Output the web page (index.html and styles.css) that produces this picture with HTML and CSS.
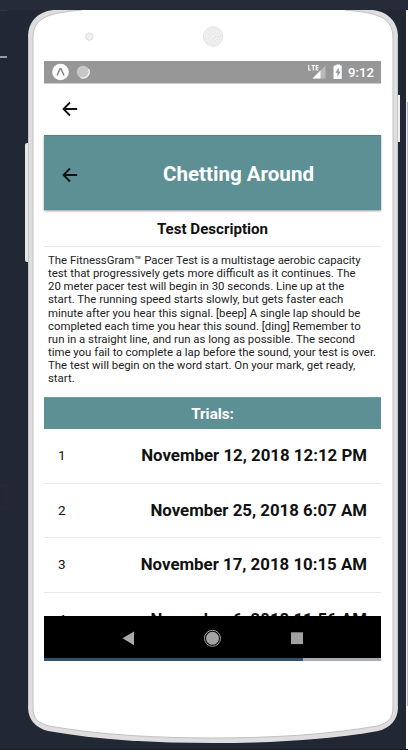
FILE: index.html
```html
<!DOCTYPE html>
<html lang="en">
<head>
<meta charset="utf-8">
<title>Chetting Around</title>
<link rel="stylesheet" href="styles.css">
</head>
<body>
<svg class="device" width="408" height="750" viewBox="0 0 408 750" aria-hidden="true">
  <path d="M0 10.500h7" stroke="#30343d"/>
  <path d="M0 57h7" stroke="#979a9b" stroke-width="2"/>
  <path d="M0 485.500h6.500v23H0" fill="none" stroke="#292a2f"/>
  <path d="M0 749.500h408" stroke="#171923"/>
  <path d="M406 10h2v92h-2z" fill="#fff"/>
  <path d="M407 102h1v604h-1z" fill="#b9bbbd"/>
  <path d="M406 102h1v604h-1z" fill="#f1f1f1"/>
  <path d="M406 706h2v43h-2z" fill="#fff"/>
  <path d="M28 143h-1q-2 0-2 2v115q0 2 2 2h1z" fill="#e6e6e6"/>
  <path d="M398 95h2v47h-2z" fill="#eee"/>
  <path d="M53 10H373C389 12 398 23 398 37V707C398 720 390 728 378 731C328 740 270 743 213 743C156 743 98 740 48 731C36 728 28 720 28 707V37C28 22 37 12 53 10Z" fill="#dedede"/>
  <path d="M82 10H345C376 13 393 16 393 38V707C393 719 388 723 377 726C326 735 269 738 213 738C157 738 100 735 49 726C38 723 33 719 33 707V38C33 17 49 13 82 10Z" fill="#fff" stroke="#c1c1c1"/>
  <path d="M60 9H365V10H60z" fill="#252b37"/>
  <path d="M82 10H345V11.500H82z" fill="#fff"/>
  <path d="M28.500 37V707M397.500 37V707" stroke="#c6c6c6"/>
  <circle cx="89.300" cy="36.500" r="3.700" fill="#f0f0f0" stroke="#dedede"/>
  <circle cx="213" cy="36.500" r="9.700" fill="#f1f1f1" stroke="#e2e2e2"/>
  <g fill="none" stroke="#d8d8d8" stroke-dasharray="1 1.500"><circle cx="213" cy="36.500" r="7.500"/><circle cx="213" cy="36.500" r="5"/><circle cx="213" cy="36.500" r="2.500"/></g>
</svg>
<main class="screen">
  <div class="status">
    <svg class="status-left" width="42" height="22" viewBox="0 0 42 22">
      <circle cx="16.500" cy="11" r="8.300" fill="#fff"/>
      <path d="M13 14.500L16 7.800h1l3 6.700" fill="none" stroke="#8d8d8d" stroke-width="1.600"/>
      <circle cx="39" cy="11" r="6.200" fill="#c7c7c7"/>
      <path d="M44.500 8A6.200 6.200 0 0 1 36.500 16.500" fill="none" stroke="#f3f3f3" stroke-width="1.300"/>
    </svg>
    <svg class="status-right" width="40" height="22" viewBox="0 0 40 22">
      <path d="M17.500 4.500V17.500H4.500z" fill="#b9b9b9"/>
      <path d="M12.500 9.500V17.500H4.500z" fill="#fff"/>
      <path d="M.8 4v5h2M3.500 4.500h3.500M5.300 4.500V9.500M10.500 4.500H8.200V9H10.500M8.200 6.700H10.500" fill="none" stroke="#fff" stroke-width="1.100"/>
      <path d="M26.500 4.500h2V3.500h3.500v1h1.700v13.500h-8.200V5.500z" fill="#fff"/>
      <path d="M30.700 6.500L27.500 11.800h2v4l3-5.300h-1.800z" fill="#929292"/>
    </svg>
    <span class="clock">9:12</span>
  </div>
  <div class="toolbar"><svg class="arrow" width="16" height="16" viewBox="0 0 16 16"><path d="M15.200 8H2M8 1.500L1.500 8L8 14.500"/></svg></div>
  <header class="header"><svg class="arrow" width="16" height="16" viewBox="0 0 16 16"><path d="M15.200 8H2M8 1.500L1.500 8L8 14.500"/></svg><h1>Chetting Around</h1></header>
  <h2 class="subtitle"><span>Test Description</span></h2>
  <p class="description">The FitnessGram™ Pacer Test is a multistage aerobic capacity<br>test that progressively gets more difficult as it continues. The<br>20 meter pacer test will begin in 30 seconds. Line up at the<br>start. The running speed starts slowly, but gets faster each<br>minute after you hear this signal. [beep] A single lap should be<br>completed each time you hear this sound. [ding] Remember to<br>run in a straight line, and run as long as possible. The second<br>time you fail to complete a lap before the sound, your test is over.<br>The test will begin on the word start. On your mark, get ready,<br>start.</p>
  <h2 class="trials"><span>Trials:</span></h2>
  <div class="list">
    <div class="row"><span>1</span><b>November 12, 2018 12:12 PM</b></div>
    <div class="row"><span>2</span><b>November 25, 2018 6:07 AM</b></div>
    <div class="row"><span>3</span><b>November 17, 2018 10:15 AM</b></div>
    <div class="row"><span>4</span><b>November 6, 2018 11:56 AM</b></div>
  </div>
  <nav class="nav">
    <svg width="337" height="42" viewBox="0 0 337 42"><path d="M78.500 22.300L90 15.500v13.700z" fill="#aaa"/><circle cx="168.500" cy="22.300" r="6.500" fill="#a3a3a3"/><circle cx="168.500" cy="22.300" r="8" fill="none" stroke="#a3a3a3"/><path d="M247 16.300h12v11.800h-12z" fill="#a1a1a1"/></svg>
  </nav>
  <div class="progress"></div>
</main>
</body>
</html>
```
FILE: styles.css
```css
* { box-sizing: border-box; }
body {
  margin: 0;
  width: 408px;
  height: 750px;
  overflow: hidden;
  background: linear-gradient(#252b37 0 10px, #222833 10px);
  font-family: Roboto, "Liberation Sans", sans-serif;
  color: #111;
}
.device { position: absolute; left: 0; top: 0; }
.screen {
  position: relative;
  display: flex;
  flex-direction: column;
  width: 337px;
  height: 600px;
  margin: 61px 0 0 44px;
  background: #fff;
}
.screen > * { flex: none; }
svg { display: block; }
.status {
  display: flex;
  height: 22px;
  background: #979797;
  box-shadow: 0 1px 0 #ccc;
}
.status-left { overflow: visible; }
.status-right { margin-left: auto; }
.clock {
  width: 33px;
  color: #fff;
  font-size: 13.2px;
  font-weight: 500;
  line-height: 23px;
  white-space: nowrap;
}
.toolbar { height: 52px; padding: 18px 0 0 18px; }
.arrow { fill: none; stroke: #111; stroke-width: 1.8; }
.header {
  display: flex;
  align-items: center;
  height: 75px;
  padding: 4px 0 0 18px;
  background: #5c9095;
  border-top: 1px solid #508185;
  box-shadow: 0 1px 2px #999;
}
h1, h2, p { margin: 0; }
h1 {
  width: 151px;
  margin: -2px 0 0 85px;
  color: #fff;
  font-size: 20.55px;
  line-height: 24px;
  white-space: nowrap;
}
.subtitle {
  height: 37px;
  padding-top: 1px;
  border-bottom: 1px solid #e8e8e8;
  font-size: 15.1px;
  line-height: 36px;
  text-align: center;
}
.description {
  height: 150px;
  padding: 7px 0 0 4px;
  color: #222;
  font-size: 11.38px;
  line-height: 13.13px;
  white-space: nowrap;
}
.trials {
  height: 32px;
  background: #5c9095;
  border-top: 1px solid #6b9fa2;
  color: #fff;
  font-size: 15.2px;
  line-height: 32px;
  text-align: center;
}
.list { height: 187px; overflow: hidden; }
.row {
  display: flex;
  align-items: center;
  justify-content: space-between;
  height: 54.7px;
  padding: 0 14px 2px;
  border-bottom: 1.5px solid #e9e9e9;
  font-size: 13.5px;
}
.row b { font-size: 16.83px; white-space: nowrap; }
.nav { height: 42px; background: #000; }
.progress { height: 3px; background: linear-gradient(90deg, #35516a 259px, #a8adb0 259px); }
```
